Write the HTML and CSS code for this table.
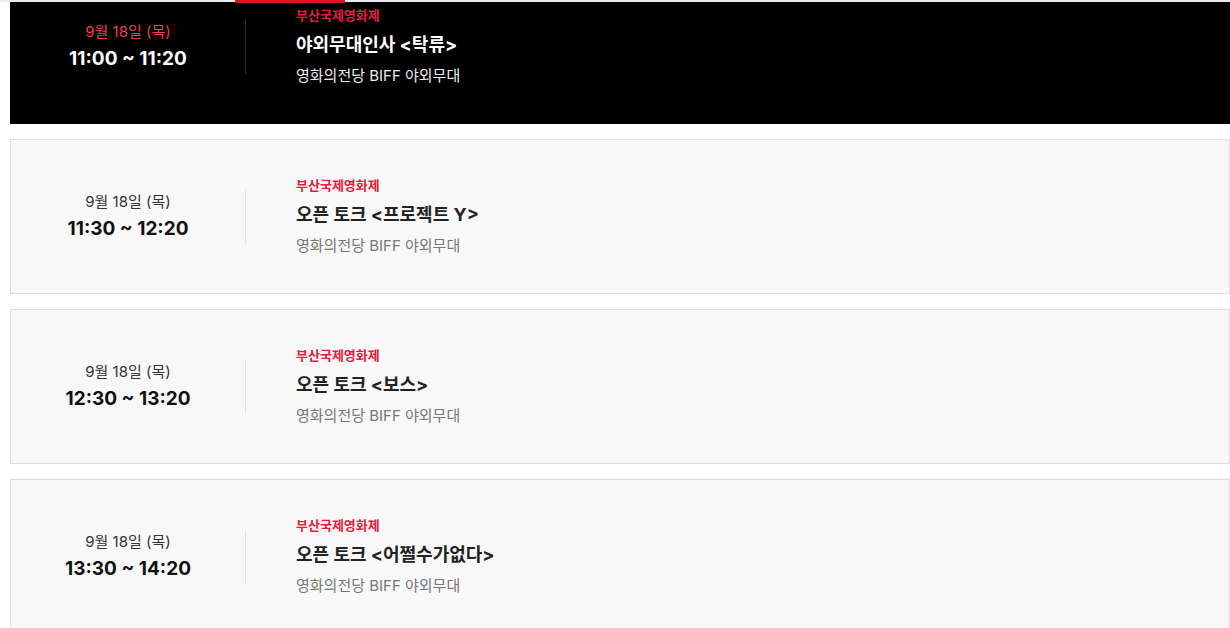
FILE: index.html
```html
<!DOCTYPE html>
<html lang="ko">
<head>
    <meta charset="UTF-8">
    <meta name="viewport" content="width=device-width, initial-scale=1.0">
    <title>BIFF 야외무대 일정</title>
    <link rel="stylesheet" href="styles.css">
</head>
<body>
    <div class="tab-line">
        <span class="tab-active"></span>
    </div>

    <ul class="schedule-list">
        <li class="schedule-item active">
            <div class="schedule-time">
                <p class="date">9월 18일 (목)</p>
                <p class="time">11:00 ~ 11:20</p>
            </div>
            <div class="schedule-info">
                <p class="category">부산국제영화제</p>
                <p class="title">야외무대인사 &lt;탁류&gt;</p>
                <p class="place">영화의전당 BIFF 야외무대</p>
            </div>
        </li>
        <li class="schedule-item">
            <div class="schedule-time">
                <p class="date">9월 18일 (목)</p>
                <p class="time">11:30 ~ 12:20</p>
            </div>
            <div class="schedule-info">
                <p class="category">부산국제영화제</p>
                <p class="title">오픈 토크 &lt;프로젝트 Y&gt;</p>
                <p class="place">영화의전당 BIFF 야외무대</p>
            </div>
        </li>
        <li class="schedule-item">
            <div class="schedule-time">
                <p class="date">9월 18일 (목)</p>
                <p class="time">12:30 ~ 13:20</p>
            </div>
            <div class="schedule-info">
                <p class="category">부산국제영화제</p>
                <p class="title">오픈 토크 &lt;보스&gt;</p>
                <p class="place">영화의전당 BIFF 야외무대</p>
            </div>
        </li>
        <li class="schedule-item">
            <div class="schedule-time">
                <p class="date">9월 18일 (목)</p>
                <p class="time">13:30 ~ 14:20</p>
            </div>
            <div class="schedule-info">
                <p class="category">부산국제영화제</p>
                <p class="title">오픈 토크 &lt;어쩔수가없다&gt;</p>
                <p class="place">영화의전당 BIFF 야외무대</p>
            </div>
        </li>
    </ul>
</body>
</html>
```

FILE: styles.css
```css
body {
    font-family: Inter, "Noto Sans CJK KR", sans-serif;
    margin: 0;
    padding: 0;
    background-color: #fff;
    color: #333;
    height: 628px;
    overflow: hidden;
}

p {
    margin: 0;
}

/* sticky tab line over the scrolled list */
.tab-line {
    position: absolute;
    top: 0;
    left: 0;
    width: 100%;
    height: 2px;
    background-color: #ececec;
    z-index: 2;
}

.tab-active {
    position: absolute;
    top: 0;
    left: 235px;
    width: 110px;
    height: 3px;
    background-color: #d7182a;
}

.schedule-list {
    list-style-type: none;
    margin: -31px 0 0 10px;
    padding: 0;
    width: 1220px;
    display: flex;
    flex-direction: column;
    gap: 15px;
}

.schedule-item {
    box-sizing: border-box;
    height: 155px;
    display: flex;
    align-items: center;
    background-color: #f8f8f8;
    border: 1px solid #dedede;
}

.schedule-time {
    box-sizing: border-box;
    width: 235px;
    height: 54px;
    padding-bottom: 2px;
    flex-shrink: 0;
    display: flex;
    flex-direction: column;
    justify-content: center;
    align-items: center;
    gap: 4px;
    border-right: 1px solid #e4e4e4;
}

.date {
    font-size: 15px;
    line-height: 22px;
    color: #333;
}

.time {
    font-size: 19px;
    line-height: 24px;
    font-weight: 700;
    color: #111;
}

.schedule-info {
    padding-left: 50px;
    padding-bottom: 1px;
    display: flex;
    flex-direction: column;
}

.category {
    font-size: 13px;
    line-height: 18px;
    font-weight: 700;
    color: #e0203a;
}

.title {
    margin-top: 9px;
    font-size: 18px;
    line-height: 24px;
    font-weight: 700;
    color: #222;
}

.place {
    margin-top: 9px;
    font-size: 15px;
    line-height: 20px;
    color: #777;
}

.schedule-item.active {
    background-color: #000;
    border-color: #000;
}

.schedule-item.active .schedule-time {
    border-right-color: #2a2a2a;
}

.schedule-item.active .date {
    color: #ef3e4a;
}

.schedule-item.active .time,
.schedule-item.active .title {
    color: #fff;
}

.schedule-item.active .place {
    color: #eee;
}
```
